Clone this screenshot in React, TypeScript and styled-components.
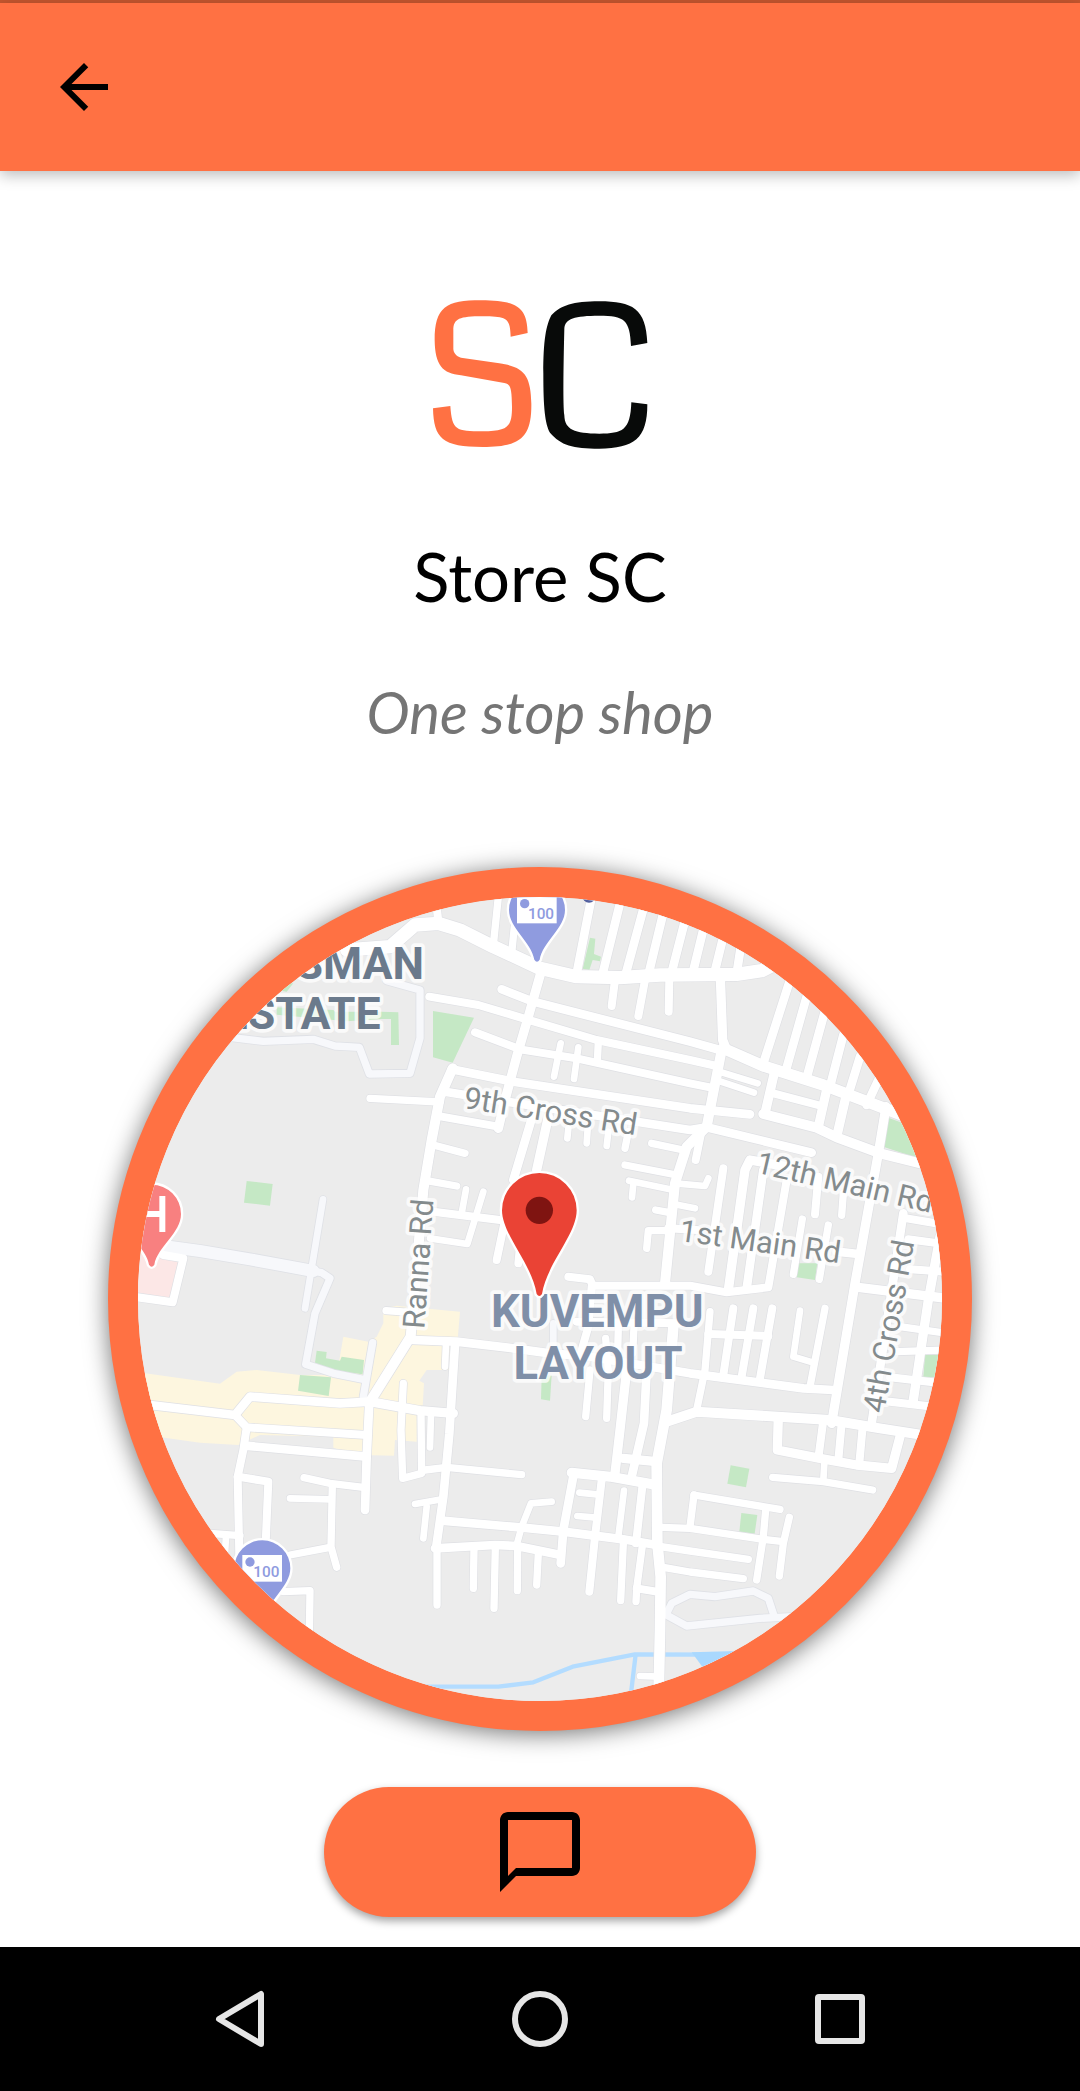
import React from "react";
import styled, { createGlobalStyle } from "styled-components";

const ACCENT = "#ff7143";

const GlobalStyle = createGlobalStyle`
  *, *::before, *::after { box-sizing: border-box; }
  body { margin: 0; background: #fff; font-family: Lato, "Liberation Sans", sans-serif; }
`;

const Screen = styled.div`
  min-height: 100vh;
  display: flex;
  flex-direction: column;
  background: #fff;
`;

const StatusBar = styled.div`
  height: 3px;
  background: #c6572f;
`;

const AppBar = styled.header`
  display: flex;
  align-items: center;
  height: 168px;
  padding: 0 48px;
  background: ${ACCENT};
  box-shadow: 0 4px 14px rgba(0, 0, 0, 0.27);
`;

const PlainButton = styled.button`
  display: flex;
  align-items: center;
  justify-content: center;
  padding: 0;
  border: 0;
  background: transparent;
  color: inherit;
  cursor: pointer;
`;

const Icon = styled.svg<{ $size: number }>`
  display: block;
  width: ${(p) => p.$size}px;
  height: ${(p) => p.$size}px;
`;

const Content = styled.main`
  flex: 1;
  display: flex;
  flex-direction: column;
  align-items: center;
  padding: 129px 0 30px;
`;

const Logo = styled.svg`
  display: block;
  width: 216px;
  height: 149px;
`;

const StoreName = styled.h1`
  margin: 87px 0 0;
  font-size: 67px;
  line-height: 80px;
  font-weight: 400;
  color: #000;
`;

const Tagline = styled.p`
  margin: 60px 0 0;
  font-size: 58px;
  line-height: 72px;
  font-style: italic;
  color: #757575;
`;

const MapFrame = styled.section`
  width: 80%;
  aspect-ratio: 1;
  margin: 119px 0 56px;
  border: 30px solid ${ACCENT};
  border-radius: 50%;
  overflow: hidden;
  background: #ececec;
  box-shadow: 0 3px 25px rgba(0, 0, 0, 0.55);
`;

const MapDrawing = styled.svg`
  display: block;
  width: 100%;
  height: 100%;
  font-family: Roboto, "Liberation Sans", sans-serif;
`;

const MessageButton = styled(PlainButton)`
  width: 40%;
  height: 130px;
  border-radius: 65px;
  background: ${ACCENT};
  color: #000;
  box-shadow: 0 4px 9px rgba(0, 0, 0, 0.36);
`;

const SystemNav = styled.nav`
  display: flex;
  justify-content: center;
  height: 144px;
  background: #000;
  color: #e6e6e6;
`;

const NavButton = styled(PlainButton)`
  flex: 0 1 300px;
`;

/* Roads as [width, points]; the tile is drawn at three units per pixel. */
type Road = [number, string];

const streets: Road[] = [
  // northern main road and the streets off it
  [40, "740,300 870,290 945,225 1015,220 1080,240 1180,290 1320,355 1430,380 1560,383 1680,375 1910,373 1985,362 2060,325"],
  [24, "1010,170 1015,215"], [22, "1195,140 1180,285"], [22, "1243,230 1235,310"],
  [26, "1475,140 1430,370"], [26, "1560,160 1507,375"], [26, "1632,170 1575,380"],
  [26, "1692,180 1645,375"], [26, "1758,200 1713,375"], [26, "1812,230 1778,370"],
  [26, "1870,260 1843,370"], [26, "1924,280 1910,370"],
  [24, "1545,390 1535,468"], [24, "1635,390 1615,498"], [24, "1708,385 1706,485"],
  [28, "1861,380 1868,570 1880,600"],
  [28, "1322,370 1285,500 1250,620 1215,750 1195,835"],
  // parallel cross roads
  [26, "1205,418 1300,455 1770,575 1860,600"],
  [34, "1870,595 1990,648 2170,705 2340,770 2430,805"],
  [24, "988,440 1135,465 1270,505 1490,570 1770,630 1850,648"],
  [24, "1125,547 1260,598 1430,625 1770,700 1830,712"],
  [26, "1055,658 1240,695 1770,775 1950,793"],
  [26, "1035,725 1220,755 1610,815 1770,840 1820,832 2135,908"],
  [20, "1865,667 1973,700"], [20, "1860,694 1962,728"],
  [20, "1382,580 1362,680"], [20, "1435,592 1422,687"], [22, "1495,575 1492,635"],
  [30, "1990,792 2150,833 2210,862 2340,910 2480,945"],
  [28, "2025,660 1995,790"], [24, "2020,730 2165,768"],
  [28, "2182,710 2155,830"], [28, "2240,730 2210,860"],
  [26, "2070,390 1990,640"], [26, "2120,440 2058,660"], [26, "2173,490 2118,690"],
  [26, "2230,555 2190,710"], [26, "2280,620 2243,740"], [26, "2335,690 2300,765"],
  [28, "2358,770 2335,910 2265,1300 2195,1720"],
  [30, "1865,600 1820,830 1760,890 1725,1000 1695,1300"],
  [24, "1805,840 1787,930"],
  // Ranna Rd and surroundings
  [30, "1058,655 1020,740 995,870 970,1020 932,1460 810,1655"],
  [22, "810,745 1020,756"], [24, "1025,800 1195,830"],
  [22, "1000,885 1095,910"], [22, "980,992 1070,1008"],
  [24, "1000,1085 1200,1110"], [20, "1098,1018 1085,1090"],
  [20, "1150,1025 1102,1182 990,1165"],
  [24, "1215,1110 1190,1230"], [24, "1260,1190 1255,1240"],
  [26, "1300,790 1240,990"], [28, "1345,800 1310,960"],
  [20, "1405,835 1402,865"], [20, "1463,835 1460,880"], [20, "1525,845 1520,888"], [22, "1585,845 1575,895"],
  [22, "1655,880 1750,900"], [22, "1575,945 1730,975"], [20, "1587,992 1710,1018"], [20, "1600,1000 1596,1042"],
  [20, "1725,1000 1815,1008 1825,985"], [20, "1720,1062 1785,1075"], [22, "1667,1080 1710,1088"],
  [22, "1640,1195 1645,1142 1705,1142"], [24, "1705,1135 1790,1140"],
  [24, "1405,1280 1470,1288 1478,1307 1770,1307 1880,1327 2005,1312 2060,990"],
  [24, "1870,955 1825,1265"],
  [28, "1885,1320 1935,960 1950,930 2060,950"], [26, "1990,960 1940,1315"],
  [24, "2155,980 2145,1093"], [22, "2230,1030 2225,1096"],
  [22, "2107,1107 2080,1273"], [22, "2185,1125 2158,1288"],
  [26, "2210,1205 2275,1212"], [28, "2275,1312 2540,1345"],
  // eastern blocks
  [26, "2410,1090 2315,1720"], [24, "2420,1105 2520,1122"], [24, "2425,1168 2530,1182"],
  [24, "2430,1258 2530,1265"], [28, "2520,1160 2485,1350 2440,1650"],
  [22, "2400,1430 2540,1450"], [22, "2390,1505 2540,1500"],
  [24, "2370,1582 2500,1597"], [24, "2370,1655 2500,1670"],
  // centre
  [26, "940,1470 1070,1475 1240,1495 1350,1510 1470,1520 1770,1570 2110,1615 2200,1620"],
  [30, "1700,1715 1790,1685 2190,1710 2340,1735 2480,1757"],
  [22, "1830,1385 1815,1560 1790,1680"], [24, "1900,1375 1870,1575"], [24, "1960,1375 1925,1580"],
  [24, "2017,1375 1980,1585"], [24, "1825,1452 2005,1458"],
  [20, "2100,1382 2080,1520 2140,1538"], [22, "2175,1375 2130,1610"],
  [24, "1430,1415 1740,1420"], [24, "1475,1310 1465,1430 1445,1500"], [22, "1470,1560 1457,1700"],
  [22, "1517,1465 1525,1560 1520,1705"], [22, "1555,1430 1553,1510"], [22, "1602,1430 1598,1510"],
  [28, "1580,1560 1560,1740 1545,1870"], [26, "1640,1560 1632,1720 1595,1880"],
  [32, "1720,1430 1700,1680 1670,1840 1672,2080 1682,2180 1680,2340 1676,2530"],
  [28, "1570,1825 1670,1835"], [30, "1415,1868 1530,1880 1670,1905"],
  [26, "1422,1868 1390,2040 1382,2140"], [24, "1505,1890 1485,2060 1468,2225"],
  [20, "1438,1928 1490,1933"], [20, "1432,1998 1480,2002"],
  [20, "1572,1922 1555,2060"], [24, "1627,1910 1608,2080"], [22, "1628,2080 1610,2215 1608,2255"],
  [24, "1610,2215 1670,2225"], [22, "1570,2080 1562,2252"],
  [26, "1025,2012 1260,2032 1390,2045 1570,2068 1670,2085"],
  [22, "1685,2032 1770,2035 1990,2068 2050,2075"],
  [20, "1355,1955 1293,1960 1265,2030 1250,2085"],
  [26, "1005,2095 1185,2085 1250,2088 1320,2102 1382,2115"],
  [22, "1011,2095 1011,2265"], [22, "1122,2095 1120,2215"], [22, "1186,2090 1182,2275"],
  [22, "1253,2090 1252,2222"], [22, "1315,2110 1310,2205"],
  [26, "1065,1485 1048,1750 1030,1940 1008,2095"],
  [20, "945,1962 1025,1948"], [20, "980,1970 970,2065"],
  [22, "975,1860 1040,1852 1265,1874"],
  [22, "910,1600 903,1740 908,1885 965,1870 963,1690"], [20, "993,1690 990,1792"],
  [28, "810,1655 960,1682 1060,1690"], [20, "1038,1480 1035,1550"], [22, "858,1382 930,1387"],
  // south-west
  [26, "150,1665 405,1695 450,1640 720,1660 810,1655"],
  [24, "405,1695 440,1732 800,1755"], [26, "435,1787 800,1820"],
  [26, "808,1655 800,1820 795,1980"],
  [24, "440,1732 430,1800 413,1880 418,2120"], [24, "413,1880 505,1895 497,2080"],
  [22, "612,1883 690,1900 790,1912"], [20, "570,1945 690,1948"],
  [22, "697,1905 693,2090 710,2152"], [22, "570,2115 690,2092"],
  [22, "330,2050 420,2057"], [20, "378,2060 375,2110"], [22, "550,2225 630,2222 628,2360"],
  [24, "190,1215 250,1225 218,1357 100,1340"],
  // south-east
  [28, "2035,1700 2032,1800 2160,1825 2270,1845 2375,1855 2400,1760"],
  [24, "2170,1710 2155,1825"], [24, "2225,1720 2215,1830"], [24, "2288,1730 2278,1840"],
  [20, "2173,1840 2170,1890"], [22, "2018,1882 2170,1895 2318,1920"],
  [22, "1782,1935 1770,2030"], [22, "1782,1935 1900,1955 2040,1978"],
  [22, "1997,1980 1990,2060 1970,2190"], [22, "2068,2002 2050,2080 2038,2178"],
  [22, "1670,2088 1770,2103 1945,2128"], [22, "1690,2152 1770,2166 1930,2186"],
  [20, "1620,2478 1680,2480"],
];

const lanes: Road[] = [
  [22, "390,562 490,574 640,568 705,588 778,592 808,672 930,670 960,565 960,420 860,392"],
  [36, "190,1188 300,1203 450,1228 640,1263"],
  [20, "669,1048 615,1375"],
  [22, "630,1262 665,1268 690,1285 645,1390 617,1543 700,1570 790,1588"],
  [22, "818,1478 790,1640"],
  [20, "1360,1420 1360,1500"],
  [22, "1700,2290 1715,2260 1770,2233 1845,2240 1960,2223 2005,2245 2023,2300"],
  [22, "1690,2290 1760,2328 1980,2305 2080,2300"],
];

const greens = [
  "999,483 1122,503 1058,638 999,622",
  "1470,263 1486,266 1482,312 1503,320 1500,334 1478,330 1468,360 1448,356",
  "530,400 580,400 560,425 530,420",
  "530,472 700,480 705,485 843,485 895,487 897,585 873,585 873,507 843,507 740,514 530,494",
  "2365,803 2410,820 2470,930 2350,890",
  "440,993 518,1002 510,1067 432,1058",
  "650,1502 680,1506 678,1525 720,1532 725,1520 792,1530 788,1573 700,1562 645,1538",
  "600,1575 693,1582 686,1638 594,1622",
  "1325,1580 1355,1575 1350,1652 1323,1648",
  "2095,1240 2152,1240 2145,1290 2090,1282",
  "2475,1515 2520,1515 2510,1582 2470,1580",
  "1892,1846 1948,1856 1938,1912 1882,1901",
  "1924,1989 1972,1995 1964,2051 1918,2045",
];

const RoadLines = ({ roads, extra, color }: { roads: Road[]; extra: number; color: string }) => (
  <g fill="none" stroke={color} strokeLinecap="round" strokeLinejoin="round">
    {roads.map(([width, points], i) => (
      <polyline key={i} points={points} strokeWidth={width + extra} />
    ))}
  </g>
);

const PinShape = ({ r, tip, fill }: { r: number; tip: number; fill: string }) => (
  <path
    d={`M${-r} 0A${r} ${r} 0 0 1 ${r} 0C${r} ${r * 0.65} ${r * 0.2} ${tip * 0.62} 8 ${tip - 6}Q0 ${tip + 6} -8 ${tip - 6}C${-r * 0.2} ${tip * 0.62} ${-r} ${r * 0.65} ${-r} 0Z`}
    fill={fill}
    stroke="#fff"
    strokeWidth="14"
    paintOrder="stroke"
    strokeLinejoin="round"
  />
);

const CashPin = ({ x, y }: { x: number; y: number }) => (
  <g transform={`translate(${x} ${y})`}>
    <PinShape r={84} tip={155} fill="#8f9bdf" />
    <rect x="-60" y="-40" width="119" height="80" fill="#fff" />
    <circle cx="-37" cy="-19" r="14" fill="#8f9bdf" />
    <text x="12" y="27" fontSize="46" fontWeight="500" textAnchor="middle" fill="#8f9bdf">100</text>
  </g>
);

type LabelProps = {
  x: number;
  y: number;
  size: number;
  angle?: number;
  weight?: number;
  color?: string;
  anchor?: "start" | "middle" | "end";
  children: string;
};

const MapLabel = ({ x, y, size, angle = 0, weight = 400, color = "#848b8d", anchor = "start", children }: LabelProps) => (
  <text
    transform={`translate(${x} ${y}) rotate(${angle})`}
    fontSize={size}
    fontWeight={weight}
    textAnchor={anchor}
    fill={color}
    stroke="#fff"
    strokeOpacity="0.75"
    strokeWidth="22"
    strokeLinejoin="round"
    paintOrder="stroke"
  >
    {children}
  </text>
);

const StoreMap = () => (
  <MapDrawing viewBox="114 141 2412 2412" role="img" aria-label="Map of the store location">
    <rect x="100" y="130" width="2440" height="2440" fill="#ececec" />
    <path
      fill="#fdf6df"
      d="M100 1565L360 1601L410 1565L470 1560L600 1575L715 1575L718 1530L730 1460L805 1475L830 1460L850 1420L850 1375L890 1367L1080 1385L1073 1468L1050 1560L980 1560L958 1592L972 1600L968 1670L950 1680L950 1775L885 1770L882 1817L785 1815L700 1793L700 1760L480 1755L415 1785L300 1778L100 1750Z"
    />
    <path fill="#fce7e6" d="M125 1200L238 1230L210 1345L110 1330Z" />
    <g fill="#c5e8c5">
      {greens.map((points) => <polygon key={points} points={points} />)}
    </g>
    <g fill="none" stroke="#b3dcff" strokeWidth="13" strokeLinejoin="round">
      <polyline points="960,2510 1195,2510 1300,2497 1418,2450 1605,2413 1900,2414" />
      <polyline points="1607,2413 1593,2530" />
    </g>
    <polygon points="1775,2407 1910,2403 1808,2452" fill="#a9d8fe" />
    <RoadLines roads={lanes} extra={5} color="#dfe1e6" />
    <RoadLines roads={streets} extra={4} color="#dfe0e4" />
    <RoadLines roads={lanes} extra={0} color="#f7f8fb" />
    <RoadLines roads={streets} extra={0} color="#fff" />

    <MapLabel x={972} y={387} size={134} weight={700} color="#6b7a8c" anchor="end">SMAN</MapLabel>
    <MapLabel x={842} y={537} size={134} weight={700} color="#6b7a8c" anchor="end">ESTATE</MapLabel>
    <MapLabel x={1492} y={1430} size={136} weight={700} color="#7f8fa8" anchor="middle">KUVEMPU</MapLabel>
    <MapLabel x={1494} y={1588} size={136} weight={700} color="#7f8fa8" anchor="middle">LAYOUT</MapLabel>
    <MapLabel x={1088} y={774} size={92} angle={9}>9th Cross Rd</MapLabel>
    <MapLabel x={1964} y={967} size={92} angle={13}>12th Main Rd</MapLabel>
    <MapLabel x={1735} y={1172} size={92} angle={8}>1st Main Rd</MapLabel>
    <MapLabel x={973} y={1438} size={92} angle={-86}>Ranna Rd</MapLabel>
    <MapLabel x={2352} y={1692} size={92} angle={-80}>4th Cross Rd</MapLabel>

    <circle cx="1467" cy="138" r="20" fill="#53609f" />
    <CashPin x={1311} y={180} />
    <CashPin x={487} y={2155} />
    <g transform="translate(155 1092)">
      <PinShape r={88} tip={158} fill="#f88080" />
      <path d="M-32 -54V54M32 -54V54M-32 0H32" fill="none" stroke="#fff" strokeWidth="18" />
    </g>
    <g transform="translate(1318 1081)">
      <PinShape r={112} tip={257} fill="#ea4335" />
      <circle r="41" fill="#7f1411" />
    </g>
  </MapDrawing>
);

export default function App() {
  return (
    <>
      <GlobalStyle />
      <Screen>
        <StatusBar />
        <AppBar>
          <PlainButton type="button" aria-label="Back">
            <Icon $size={72} viewBox="0 0 24 24" aria-hidden="true">
              <path d="M20 11H7.83l5.59-5.59L12 4l-8 8 8 8 1.41-1.41L7.83 13H20v-2z" />
            </Icon>
          </PlainButton>
        </AppBar>

        <Content>
          <Logo viewBox="278 89 648 447" role="img" aria-label="Store logo">
            <path
              fill={ACCENT}
              d="M565 188C563 112 535 90 425 90C320 90 286 110 286 210C287 285 310 310 365 315L495 338C515 342 517 355 518 410C518 470 505 483 430 483C350 483 338 480 333 407L281 414C283 505 310 530 430 530C545 530 577 500 576 400C574 315 555 290 480 279L365 262C350 258 342 245 342 235V180C342 145 360 138 430 138C505 138 512 145 514 199Z"
            />
            <path
              fill="#080a09"
              d="M924 218C920 115 880 93 780 93C700 93 665 105 636 135C620 165 612 210 612 310C612 410 617 460 632 487C665 525 700 535 780 535C885 534 924 505 924 402L876 396C873 480 850 490 780 490C705 490 676 478 675 435C671 400 672 300 675 175C677 145 705 136 780 136C855 136 872 148 875 227Z"
            />
          </Logo>
          <StoreName>Store SC</StoreName>
          <Tagline>One stop shop</Tagline>
          <MapFrame>
            <StoreMap />
          </MapFrame>
          <MessageButton type="button" aria-label="Message the store">
            <Icon $size={96} viewBox="0 0 24 24" aria-hidden="true">
              <path d="M20 2H4c-1.100 0-2 .9-2 2v18l4-4h14c1.100 0 2-.9 2-2V4c0-1.100-.9-2-2-2zm0 14H6l-2 2V4h16v12z" />
            </Icon>
          </MessageButton>
        </Content>

        <SystemNav aria-label="System">
          <NavButton type="button" aria-label="Back">
            <Icon $size={60} viewBox="0 0 60 60" aria-hidden="true">
              <path d="M51 5V55L9 30Z" fill="none" stroke="currentColor" strokeWidth="6" strokeLinejoin="round" />
            </Icon>
          </NavButton>
          <NavButton type="button" aria-label="Home">
            <Icon $size={60} viewBox="0 0 60 60" aria-hidden="true">
              <circle cx="30" cy="30" r="25" fill="none" stroke="currentColor" strokeWidth="6" />
            </Icon>
          </NavButton>
          <NavButton type="button" aria-label="Recent apps">
            <Icon $size={60} viewBox="0 0 60 60" aria-hidden="true">
              <rect x="8" y="8" width="44" height="44" rx="1" fill="none" stroke="currentColor" strokeWidth="6" strokeLinejoin="round" />
            </Icon>
          </NavButton>
        </SystemNav>
      </Screen>
    </>
  );
}
